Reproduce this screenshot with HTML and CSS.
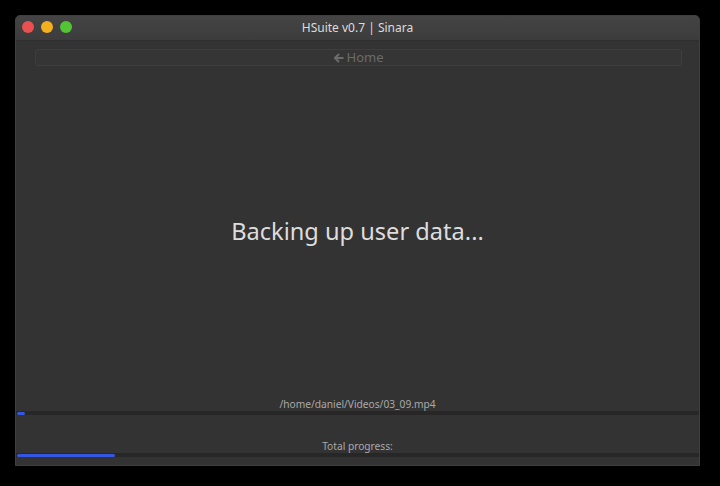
FILE: index.html
```html
<!DOCTYPE html>
<html>
<head>
<meta charset="utf-8">
<link rel="stylesheet" href="styles.css">
</head>
<body>
<div class="window">
  <div class="titlebar">
    <div class="lights">
      <span class="light red"></span>
      <span class="light yellow"></span>
      <span class="light green"></span>
    </div>
    <div class="title">HSuite v0.7 | Sinara</div>
  </div>
  <div class="content">
    <div class="home-btn">
      <svg class="arrow" width="10" height="10" viewBox="0 0 10 10"><path d="M5 1 L1 5 L5 9 M1.5 5 H9.5" fill="none" stroke="currentColor" stroke-width="2" stroke-linecap="butt" stroke-linejoin="miter"/></svg>
      <span>Home</span>
    </div>
    <div class="main">
      <div class="status">Backing up user data...</div>
    </div>
    <div class="bottom">
      <div class="label file">/home/daniel/Videos/03_09.mp4</div>
      <div class="track"><div class="fill" style="width:8px"></div></div>
      <div class="spacer"></div>
      <div class="label total">Total progress:</div>
      <div class="track"><div class="fill" style="width:98px"></div></div>
    </div>
  </div>
</div>
</body>
</html>
```
FILE: styles.css
```css
html, body {
  margin: 0;
  padding: 0;
  background: #000;
  width: 720px;
  height: 486px;
  overflow: hidden;
  font-family: "Noto Sans", "Open Sans", sans-serif;
}
body {
  padding: 15px 0 0 15px;
  box-sizing: border-box;
}
.window {
  width: 685px;
  height: 451px;
  box-sizing: border-box;
  border: 1px solid #3f3f3f;
  border-radius: 5px 5px 0 0;
  background: #333333;
  display: flex;
  flex-direction: column;
  overflow: hidden;
}
.titlebar {
  height: 24px;
  flex: none;
  background: linear-gradient(#444444, #3c3c3c);
  border-bottom: 1px solid #2e2e2e;
  display: flex;
  align-items: center;
  justify-content: center;
  position: relative;
}
.lights {
  position: absolute;
  left: 6px;
  top: 5px;
  display: flex;
  gap: 7px;
}
.light {
  width: 12px;
  height: 12px;
  border-radius: 50%;
  display: block;
}
.red { background: #e9504f; }
.yellow { background: #f2b01f; }
.green { background: #53c434; }
.title {
  color: #dcdcdc;
  font-size: 12px;
  line-height: 24px;
}
.content {
  flex: 1;
  display: flex;
  flex-direction: column;
}
.home-btn {
  margin: 8px 17px 0 19px;
  height: 17px;
  box-sizing: border-box;
  border: 1px solid #3e3e3e;
  border-radius: 3px;
  background: #353535;
  display: flex;
  align-items: center;
  justify-content: center;
  gap: 3px;
  color: #6b6b6b;
  font-size: 13px;
}
.home-btn span {
  line-height: 15px;
}
.main {
  flex: 1;
  display: flex;
  align-items: center;
  justify-content: center;
}
.status {
  color: #dddddd;
  font-size: 23.6px;
  margin-top: 0px;
}
.bottom {
  display: flex;
  flex-direction: column;
  padding-bottom: 8px;
}
.label {
  text-align: center;
  color: #a9a9a9;
  font-size: 10.2px;
}
.label.file {
  line-height: 14px;
  height: 14px;
  padding-top: 1px;
}
.label.total {
  line-height: 13px;
  height: 13px;
}
.spacer {
  height: 25px;
}
.track {
  height: 4px;
  background: #272727;
  padding: 0 1px;
  display: flex;
  align-items: center;
}
.fill {
  height: 3px;
  background: #3357e2;
  border-radius: 2px;
}
```
